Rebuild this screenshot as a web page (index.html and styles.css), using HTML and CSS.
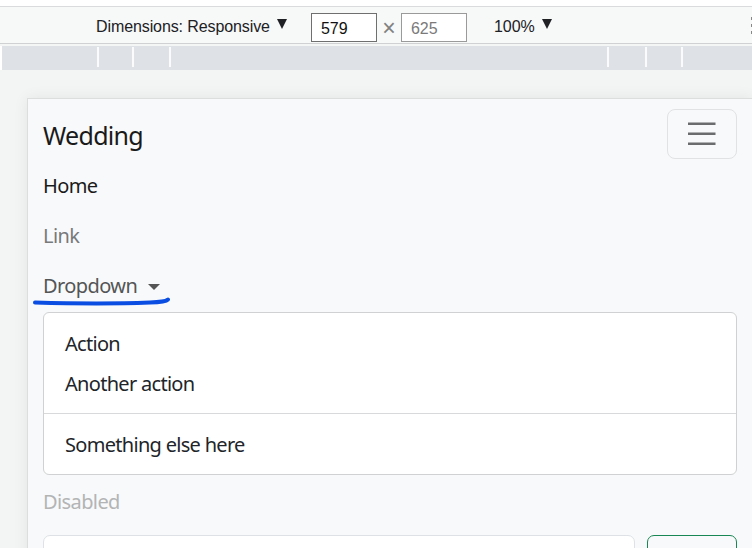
FILE: index.html
```html
<!DOCTYPE html>
<html>
<head>
<meta charset="utf-8">
<link rel="stylesheet" href="styles.css">
</head>
<body>
<div class="topgap"></div>
<div class="toolbar">
  <span class="dim">Dimensions: Responsive</span><span class="tri"></span>
  <span class="box box-w">579</span>
  <span class="times">&times;</span>
  <span class="box box-h">625</span>
  <span class="zoom">100%</span><span class="tri tri2"></span>
  <span class="kebab"><i></i><i></i><i></i></span>
</div>
<div class="sep"></div>
<div class="ruler">
  <span class="mk m1"></span><span class="mk m2"></span><span class="mk m3"></span>
  <span class="mk m4"></span><span class="mk m5"></span><span class="mk m6"></span>
</div>
<div class="stage">
  <div class="frame">
    <div class="navbar">
      <div class="brandrow">
        <span class="brand">Wedding</span>
        <span class="toggler">
          <svg width="37.5" height="37.5" viewBox="0 0 30 30"><path d="M4 7h22M4 15h22M4 23h22" stroke="#6b6c6d" stroke-width="2" stroke-linecap="butt"/></svg>
        </span>
      </div>
      <ul class="nav">
        <li class="nav-link active">Home</li>
        <li class="nav-link">Link</li>
        <li class="nav-link dd">Dropdown<span class="caret"></span></li>
        <li class="menu">
          <div class="item">Action</div>
          <div class="item">Another action</div>
          <div class="divider"></div>
          <div class="item">Something else here</div>
        </li>
        <li class="nav-link disabled">Disabled</li>
      </ul>
      <div class="form">
        <div class="input"></div>
        <div class="btn"></div>
      </div>
    </div>
  </div>
  <svg class="scribble" width="150" height="14" viewBox="0 0 150 14"><path d="M3 8.5 C 40 9.5, 90 9.5, 118 8.5 C 128 8.2, 134 7.5, 136 5.5" fill="none" stroke="#0a4de3" stroke-width="4" stroke-linecap="round"/></svg>
</div>
</body>
</html>
```
FILE: styles.css
```css
html, body {
  margin: 0;
  padding: 0;
  width: 752px;
  height: 548px;
  overflow: hidden;
  background: #fff;
}
body {
  font-family: "Segoe UI", "Noto Sans", sans-serif;
}
.topgap { height: 6px; background: #fff; }
.toolbar {
  height: 36px;
  border-top: 1px solid #d9dbdc;
  border-bottom: 1px solid #cfd1d2;
  background: #f7f8f8;
  display: flex;
  align-items: center;
  font-family: "Liberation Sans", sans-serif;
  font-size: 16px;
  color: #202124;
  position: relative;
}
.dim { margin-left: 96px; letter-spacing: -0.1px; position: relative; top: 2px; }
.tri {
  width: 0;
  height: 0;
  margin-left: 7px;
  margin-top: -2px;
  border-top: 10px solid #202124;
  border-left: 5px solid transparent;
  border-right: 5px solid transparent;
}
.box {
  box-sizing: border-box;
  width: 66px;
  height: 29px;
  border: 1px solid #6f6f6f;
  background: #fff;
  padding-left: 9px;
  padding-top: 2px;
  line-height: 25px;
  margin-top: 5px;
}
.box-w { margin-left: 24px; color: #111; }
.box-h { border-color: #9a9a9a; color: #7a7a7a; }
.times {
  width: 24px;
  text-align: center;
  color: #808080;
  font-size: 23px;
  line-height: 20px;
  position: relative;
  top: 3px;
}
.zoom { margin-left: 27px; position: relative; top: 2px; }
.tri2 { margin-left: 7px; }
.kebab {
  position: absolute;
  right: -2px;
  top: 10px;
  display: flex;
  flex-direction: column;
  gap: 4px;
}
.kebab i { width: 3px; height: 3px; background: #888; display: block; }
.sep { height: 2px; background: #f4f5f5; }
.ruler {
  height: 24px;
  margin-left: 2px;
  background: #dee1e6;
  position: relative;
}
.mk {
  position: absolute;
  top: 1px;
  width: 2px;
  height: 20px;
  background: #fbfbfc;
}
.m1 { left: 95px; }
.m2 { left: 130px; }
.m3 { left: 167px; }
.m4 { left: 605px; }
.m5 { left: 643px; }
.m6 { left: 679px; }
.stage {
  position: relative;
  height: 478px;
  background: #f3f4f4;
  padding: 28px 0 0 27px;
  box-sizing: border-box;
}
.frame {
  box-sizing: border-box;
  width: 726px;
  height: 500px;
  border: 1px solid #dcdddd;
  background: #f8f9fa;
  box-shadow: 0 0 14px rgba(0,0,0,0.07);
  font-family: "Noto Sans", "Segoe UI", sans-serif;
}
.navbar { padding: 10px 15px; }
.brandrow {
  display: flex;
  justify-content: space-between;
  align-items: center;
}
.brand {
  font-size: 25px;
  line-height: 37.5px;
  padding: 8px 0 4px;
  color: #1a1a1a;
  letter-spacing: -0.7px;
}
.toggler {
  box-sizing: border-box;
  width: 70px;
  height: 50px;
  border: 1px solid #e1e2e3;
  border-radius: 8px;
  display: flex;
  align-items: center;
  justify-content: center;
}
.toggler svg { display: block; }
.nav {
  list-style: none;
  margin: 0 0 10px;
  padding: 0;
  font-size: 20px;
  line-height: 30px;
}
.nav-link {
  padding: 12px 0 8px;
  color: #78797a;
  letter-spacing: -0.6px;
}
.nav-link.active { color: #1b1b1b; }
.nav-link.dd { color: #545556; display: flex; align-items: center; }
.nav-link.disabled { color: #b3b4b5; }
.caret {
  width: 0;
  height: 0;
  margin-left: 11px;
  margin-top: 1px;
  border-top: 6px solid #555;
  border-left: 6px solid transparent;
  border-right: 6px solid transparent;
}
.menu {
  margin-top: 3px;
  background: #fff;
  border: 1px solid #d0d1d2;
  border-radius: 6px;
  padding: 10px 0;
}
.item {
  padding: 6px 21px 4px;
  color: #212529;
  letter-spacing: -0.7px;
}
.divider {
  height: 1px;
  background: #d8d9da;
  margin: 10px 0;
}
.form {
  display: flex;
  gap: 12px;
}
.input {
  flex: 1;
  height: 47px;
  border: 1px solid #dee2e6;
  border-radius: 7px;
  background: #fff;
  box-sizing: border-box;
}
.btn {
  width: 90px;
  height: 47px;
  border: 1px solid #198754;
  border-radius: 7px;
  box-sizing: border-box;
}
.scribble {
  position: absolute;
  left: 32px;
  top: 224px;
}
```
